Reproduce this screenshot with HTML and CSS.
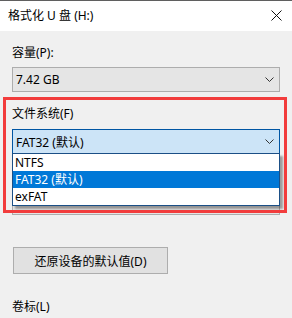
FILE: index.html
```html
<!DOCTYPE html>
<html lang="zh-CN">
<head>
    <meta charset="UTF-8">
    <title>格式化 U 盘 (H:)</title>
    <link rel="stylesheet" href="styles.css">
</head>
<body>
    <div class="window">
        <div class="titlebar">
            <span class="title">格式化 U 盘 (H:)</span>
            <svg class="close" width="11" height="11" viewBox="0 0 11 11">
                <path d="M0.5 0.5 L10.5 10.5 M10.5 0.5 L0.5 10.5" stroke="#111" stroke-width="1" fill="none"/>
            </svg>
        </div>
        <div class="content">
            <div class="field">
                <div class="label">容量(P):</div>
                <div class="combo">
                    <span>7.42 GB</span>
                    <svg class="chevron" width="9" height="5" viewBox="0 0 9 5"><path d="M0.5 0.5 L4.5 4.5 L8.5 0.5" stroke="#333" fill="none"/></svg>
                </div>
            </div>
            <div class="field field-open">
                <div class="label">文件系统(F)</div>
                <div class="combo combo-focus">
                    <span>FAT32 (默认)</span>
                    <svg class="chevron" width="9" height="5" viewBox="0 0 9 5"><path d="M0.5 0.5 L4.5 4.5 L8.5 0.5" stroke="#333" fill="none"/></svg>
                </div>
                <ul class="dropdown">
                    <li>NTFS</li>
                    <li class="selected">FAT32 (默认)</li>
                    <li>exFAT</li>
                </ul>
            </div>
            <!-- covered by the open list -->
            <div class="field field-under">
                <div class="label"></div>
                <div class="combo"></div>
            </div>
            <button type="button" class="restore">还原设备的默认值(D)</button>
            <div class="label volume">卷标(L)</div>
        </div>
        <!-- red annotation around the file system option -->
        <div class="highlight"></div>
    </div>
</body>
</html>
```

FILE: styles.css
```css
body {
    margin: 0;
    padding: 0;
    font-family: 'Noto Sans', 'Noto Sans CJK SC', sans-serif;
    font-size: 12px;
    color: #000;
    background-color: #f0f0f0;
}
.window {
    position: relative;
    width: 292px;
    height: 318px;
    overflow: hidden;
    background-color: #f0f0f0;
}
.titlebar {
    height: 30px;
    border-top: 1px solid #5f5f5f;
    background: #fff;
    display: flex;
    align-items: center;
    justify-content: space-between;
    padding: 0 10px 0 8px;
}
.title {
    line-height: 16px;
}
.close {
    display: block;
    margin-top: -1px;
}
.content {
    padding: 0 12px;
}
.field {
    margin-top: 14px;
}
.field-open {
    position: relative;
    z-index: 1;
}
.label {
    line-height: 16px;
    height: 16px;
    margin-bottom: 6px;
}
.combo {
    height: 25px;
    box-sizing: border-box;
    border: 1px solid #adadad;
    background: #e5e5e5;
    display: flex;
    align-items: center;
    justify-content: space-between;
    padding: 0 5px 0 3px;
}
.combo-focus {
    margin-top: 7px;
    border-color: #0055a3;
    background: #cce4f7;
}
.field-open .label {
    margin-bottom: 0;
}
.chevron {
    display: block;
}
.dropdown {
    position: absolute;
    left: 0;
    right: 0;
    top: 47px;
    margin: 0;
    padding: 0;
    list-style: none;
    background: #fff;
    border: 1px solid #1b4f86;
    box-shadow: 3px 3px 2px rgba(0, 0, 0, 0.35);
}
.dropdown li {
    height: 17px;
    line-height: 17px;
    padding-left: 2px;
}
.dropdown li.selected {
    background: #0078d7;
    color: #fff;
}
.restore {
    display: block;
    margin: 32px 0 0 1px;
    width: 155px;
    height: 27px;
    border: 1px solid #adadad;
    background: #e1e1e1;
    font-family: inherit;
    font-size: 12px;
    color: #000;
    padding: 0;
}
.volume {
    margin-top: 25px;
}
.highlight {
    position: absolute;
    left: 3px;
    top: 97px;
    width: 284px;
    height: 116px;
    box-sizing: border-box;
    border: 3px solid #f23c3c;
    z-index: 2;
}
```
